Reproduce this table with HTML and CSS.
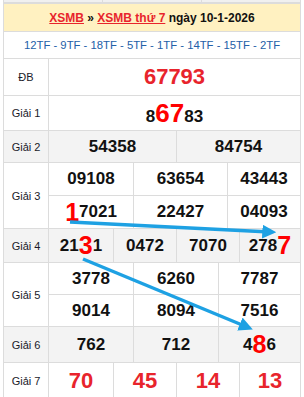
FILE: index.html
```html
<!DOCTYPE html>
<html>
<head>
<meta charset="utf-8">
<link rel="stylesheet" href="styles.css">
</head>
<body>
<div class="page">
  <div class="prev">
    <span class="pc"></span><span class="pc"></span><span class="pc"></span>
  </div>
  <table class="kq">
    <colgroup><col class="col-lb"><col class="col-v"></colgroup>
    <tr class="head">
      <td colspan="2"><a class="lk" href="#">XSMB</a> » <a class="lk" href="#">XSMB thứ 7</a> ngày 10-1-2026</td>
    </tr>
    <tr class="codes">
      <td colspan="2">12TF - 9TF - 18TF - 5TF - 1TF - 14TF - 15TF - 2TF</td>
    </tr>
    <tr class="r-db">
      <td class="lb">ĐB</td>
      <td class="v"><span class="db">67793</span></td>
    </tr>
    <tr class="r-g1">
      <td class="lb">Giải 1</td>
      <td class="v"><span class="num">8<span class="hl1">67</span>83</span></td>
    </tr>
    <tr class="r-g2 alt">
      <td class="lb">Giải 2</td>
      <td class="v"><div class="g g2"><div class="c num">54358</div><div class="c num">84754</div></div></td>
    </tr>
    <tr class="r-g3">
      <td class="lb" rowspan="2">Giải 3</td>
      <td class="v"><div class="g g3"><div class="c num">09108</div><div class="c num">63654</div><div class="c num">43443</div></div></td>
    </tr>
    <tr class="r-g3b">
      <td class="v"><div class="g g3"><div class="c num"><span class="hl">1</span>7021</div><div class="c num">22427</div><div class="c num">04093</div></div></td>
    </tr>
    <tr class="r-g4 alt">
      <td class="lb">Giải 4</td>
      <td class="v"><div class="g g4"><div class="c num">21<span class="hl">3</span>1</div><div class="c num">0472</div><div class="c num">7070</div><div class="c num">278<span class="hl">7</span></div></div></td>
    </tr>
    <tr class="r-g5">
      <td class="lb" rowspan="2">Giải 5</td>
      <td class="v"><div class="g g5"><div class="c num">3778</div><div class="c num">6260</div><div class="c num">7787</div></div></td>
    </tr>
    <tr class="r-g5b">
      <td class="v"><div class="g g5"><div class="c num">9014</div><div class="c num">8094</div><div class="c num">7516</div></div></td>
    </tr>
    <tr class="r-g6 alt">
      <td class="lb">Giải 6</td>
      <td class="v"><div class="g g5"><div class="c num">762</div><div class="c num">712</div><div class="c num">4<span class="hl">8</span>6</div></div></td>
    </tr>
    <tr class="r-g7">
      <td class="lb">Giải 7</td>
      <td class="v"><div class="g g4"><div class="c g7">70</div><div class="c g7">45</div><div class="c g7">14</div><div class="c g7">13</div></div></td>
    </tr>
  </table>
  <svg class="arrows" width="304" height="397" viewBox="0 0 304 397">
    <defs>
      <marker id="ah" markerWidth="4" markerHeight="4" refX="2.2" refY="2" orient="auto" markerUnits="strokeWidth">
        <path d="M0,0 L4,2 L0,4 Z" fill="#1ea1e3"/>
      </marker>
    </defs>
    <line x1="70" y1="222" x2="270" y2="232" stroke="#1ea1e3" stroke-width="3.5" marker-end="url(#ah)"/>
    <line x1="83" y1="259" x2="247" y2="327" stroke="#1ea1e3" stroke-width="3.5" marker-end="url(#ah)"/>
  </svg>
</div>
</body>
</html>
```

FILE: styles.css
```css
html, body {
  margin: 0;
  padding: 0;
  background: #fff;
}
.page {
  position: relative;
  width: 304px;
  height: 397px;
  overflow: hidden;
  font-family: "Liberation Sans", Arial, sans-serif;
}
.prev {
  display: flex;
  margin: 0 3px;
  height: 2px;
  background: #f0f0f0;
  border-bottom: 2px solid #dcdcdc;
  border-left: 1px solid #dcdcdc;
  border-right: 1px solid #dcdcdc;
}
.pc {
  flex: 1;
  border-right: 1px solid #dcdcdc;
}
.pc:last-child { border-right: 0; }
.kq {
  margin-left: 3px;
  width: 298px;
  border-collapse: collapse;
  table-layout: fixed;
}
.col-lb { width: 45px; }
.kq td {
  border: 1px solid #dcdcdc;
  padding: 0;
  text-align: center;
  vertical-align: middle;
}
.head td {
  background: #fff1c1;
  height: 27px;
  font-size: 12px;
  font-weight: bold;
  color: #111;
  border-top: 0;
}
.lk {
  color: #e8242c;
  text-decoration: underline;
}
.codes td {
  height: 26px;
  font-size: 11.3px;
  color: #2360a8;
}
.lb {
  font-size: 11px;
  color: #1a1a2a;
}
.alt td { background: #f3f3f3; }
.r-db td { height: 36px; }
.r-g1 td { height: 34px; }
.r-g2 td { height: 31px; }
.r-g3 td, .r-g3b td { height: 32px; }
.r-g4 td { height: 33px; }
.r-g5 td, .r-g5b td { height: 31px; }
.r-g6 td { height: 35px; }
.r-g7 td { height: 35px; }
.g {
  display: grid;
  height: 100%;
  align-items: stretch;
}
.g2 { grid-template-columns: 127px 1fr; }
.g3 { grid-template-columns: 84px 94px 1fr; }
.g4 { grid-template-columns: 64px 63px 63px 1fr; }
.g5 { grid-template-columns: 84px 85px 1fr; }
.c {
  display: flex;
  align-items: center;
  justify-content: center;
  border-left: 1px solid #dcdcdc;
}
.c:first-child { border-left: 0; }
.num {
  font-size: 17px;
  font-weight: bold;
  color: #111;
}
.db {
  font-size: 22px;
  font-weight: bold;
  color: #e8242c;
}
.hl1 {
  font-size: 26px;
  color: #f00;
}
.hl {
  font-size: 25px;
  color: #f00;
  font-weight: bold;
}
.g7 {
  font-size: 22px;
  font-weight: bold;
  color: #e8242c;
}
.arrows {
  position: absolute;
  left: 0;
  top: 0;
  pointer-events: none;
}
```
